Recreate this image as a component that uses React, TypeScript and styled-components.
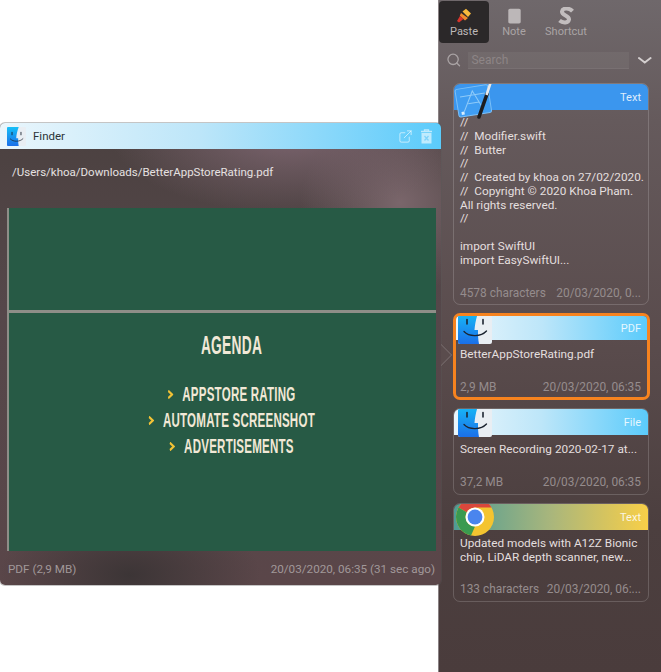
import React from 'react';
import styled, { createGlobalStyle } from 'styled-components';
import { ExternalLink, Search } from 'lucide-react';

const GlobalStyle = createGlobalStyle`
  html, body {
    margin: 0;
    padding: 0;
    background: #fff;
    font-family: "Roboto", "Noto Sans", sans-serif;
  }
`;

const Desktop = styled.div`
  position: relative;
  width: 661px;
  height: 672px;
  overflow: hidden;
  background: #fff;
`;

const Sidebar = styled.aside`
  position: absolute;
  left: 438px;
  top: 0;
  width: 223px;
  height: 672px;
  box-sizing: border-box;
  display: flex;
  flex-direction: column;
  border-left: 1px solid #8a8284;
  background: linear-gradient(180deg, #6f686b 0%, #655a5c 18%, #5a4c4d 50%, #4c3f3f 78%, #4a3c3c 100%);
`;

const Tabs = styled.div`
  display: flex;
  height: 44px;
  padding-top: 1px;
  box-sizing: border-box;
`;

const Tab = styled.div<{ $active?: boolean; $width: number }>`
  width: ${({ $width }) => $width}px;
  height: 42px;
  box-sizing: border-box;
  padding-top: 6px;
  display: flex;
  flex-direction: column;
  align-items: center;
  gap: 1px;
  border-radius: 4px;
  background: ${({ $active }) => ($active ? '#2b2829' : 'transparent')};
  color: ${({ $active }) => ($active ? '#bdb9b9' : '#aaa4a5')};
  font-size: 11px;
  line-height: 14px;
`;

const TabIcon = styled.div`
  height: 17px;
  display: flex;
  align-items: center;
  justify-content: center;
`;

const SearchRow = styled.div`
  display: flex;
  align-items: center;
  height: 32px;
  padding: 0 9px 0 7px;
  color: #a9a3a4;
`;

const SearchInput = styled.input`
  width: 161px;
  height: 17px;
  margin-left: 7px;
  margin-right: 9px;
  padding: 0 3px;
  box-sizing: border-box;
  border: 0;
  border-bottom: 1px solid rgba(255, 255, 255, 0.06);
  outline: none;
  background: rgba(255, 255, 255, 0.05);
  font-family: inherit;
  font-size: 12px;
  color: #8f8788;

  &::placeholder {
    color: #8d8586;
    opacity: 1;
  }
`;

const CardList = styled.div`
  display: flex;
  flex-direction: column;
  gap: 8px;
  padding: 7px 12px 0 14px;
`;

const Card = styled.section<{ $height: number; $selected?: boolean }>`
  position: relative;
  height: ${({ $height }) => $height}px;
  width: ${({ $selected }) => ($selected ? 197 : 196)}px;
  box-sizing: border-box;
  display: flex;
  flex-direction: column;
  overflow: hidden;
  border-radius: 7px;
  border: ${({ $selected }) => ($selected ? '3px solid #f6831f' : '1px solid rgba(255, 255, 255, 0.17)')};
`;

const CardHeader = styled.header<{ $background: string; $selected?: boolean }>`
  height: ${({ $selected }) => ($selected ? 24 : 26)}px;
  flex-shrink: 0;
  display: flex;
  align-items: center;
  justify-content: flex-end;
  padding-right: ${({ $selected }) => ($selected ? 6 : 7)}px;
  background: ${({ $background }) => $background};
  color: rgba(255, 255, 255, 0.85);
  font-size: 11px;
`;

const IconSlot = styled.div<{ $left: number; $top: number }>`
  position: absolute;
  left: ${({ $left }) => $left}px;
  top: ${({ $top }) => $top}px;
  display: flex;
`;

const CardText = styled.div<{ $selected?: boolean; $top?: number }>`
  flex: 1;
  padding: ${({ $top }) => $top ?? 6}px 4px 0 ${({ $selected }) => ($selected ? 4 : 6)}px;
  color: #e4dfdf;
  font-size: 11.8px;
  line-height: 13.75px;
  white-space: pre;
`;

const CardFooter = styled.footer<{ $selected?: boolean; $bottom?: number }>`
  display: flex;
  justify-content: space-between;
  white-space: nowrap;
  padding: 0 ${({ $selected }) => ($selected ? '6px' : '7px')} ${({ $bottom }) => $bottom ?? 5}px ${({ $selected }) => ($selected ? '4px' : '6px')};
  color: #958c8d;
  font-size: 11.9px;
  line-height: 14px;
`;

const FinderWindow = styled.div`
  position: absolute;
  left: 0;
  top: 123px;
  width: 441px;
  height: 462px;
  display: flex;
  flex-direction: column;
  border-radius: 5px;
  box-shadow: 0 0 0 1px rgba(90, 90, 90, 0.35);
  background:
    radial-gradient(130px 70px at 130px 452px, #3c3536 0%, rgba(60, 53, 54, 0) 100%),
    radial-gradient(180px 80px at 290px 10px, #7c656f 0%, rgba(124, 101, 111, 0) 100%),
    radial-gradient(100px 90px at 400px 80px, #7a666b 0%, rgba(122, 102, 107, 0) 100%),
    linear-gradient(180deg, #4b4140 0%, #55474a 40%, #5a4649 100%);
`;

const PopoverArrow = styled.div`
  position: absolute;
  left: 441px;
  top: 218px;
  width: 12px;
  height: 28px;
  overflow: hidden;

  &::before {
    content: '';
    position: absolute;
    left: -8px;
    top: 6px;
    width: 15px;
    height: 15px;
    transform: rotate(45deg);
    background: #5a4c4d;
    border-top: 1px solid rgba(255, 255, 255, 0.16);
    border-right: 1px solid rgba(255, 255, 255, 0.16);
  }
`;

const TitleBar = styled.header`
  height: 26px;
  flex-shrink: 0;
  display: flex;
  align-items: center;
  padding: 0 8px 0 7px;
  border-radius: 5px 5px 0 0;
  background: linear-gradient(90deg, #eaf6fc 0%, #bde6f9 45%, #5bcbfb 100%);
  color: #2c3438;
  font-size: 11.5px;
`;

const TitleText = styled.span`
  flex: 1;
  margin-left: 7px;
`;

const TitleActions = styled.div`
  display: flex;
  align-items: center;
  gap: 7px;
  color: rgba(255, 255, 255, 0.6);
`;

const PathRow = styled.div`
  height: 59px;
  box-sizing: border-box;
  padding: 15px 0 0 12px;
  color: #e6e1e1;
  font-size: 11.5px;
  line-height: 16px;
`;

const Slide = styled.div`
  height: 343px;
  margin: 0 5px 0 7px;
  box-sizing: border-box;
  display: flex;
  flex-direction: column;
  border-left: 2px solid #8e8e88;
  background: #275a45;
`;

const SlideRule = styled.div`
  height: 3px;
  margin-top: 102px;
  background: #8e8e88;
`;

const SlideBody = styled.div`
  flex: 1;
  display: flex;
  flex-direction: column;
  align-items: center;
  padding: 18px 0 0 18px;
  color: #f1e8d6;
  font-family: "Liberation Sans", sans-serif;
  font-weight: 700;
  transform: scaleX(0.55);
  transform-origin: calc(50% + 9px) 0;
`;

const SlideTitle = styled.div`
  font-size: 25px;
  line-height: 28px;
  letter-spacing: 0.5px;
  margin-bottom: 22px;
`;

const SlideItem = styled.div`
  height: 26px;
  display: flex;
  align-items: center;
  gap: 16px;
  font-size: 21px;
  letter-spacing: 0.4px;
  white-space: nowrap;
`;

const Chevron = styled.svg`
  width: 11px;
  height: 9px;
`;

const WindowFooter = styled.footer`
  flex: 1;
  display: flex;
  align-items: center;
  justify-content: space-between;
  padding: 2px 6px 0 8px;
  color: #a19899;
  font-size: 11.7px;
`;

const FinderIcon = ({ size, cropped }: { size: number; cropped?: boolean }) => (
  <svg width={size} height={cropped ? (size * 28) / 34 : size} viewBox={cropped ? '0 6 34 28' : '0 0 34 34'}>
    <defs>
      <linearGradient id="finderBlue" x1="0" y1="0" x2="0" y2="1">
        <stop offset="0" stopColor="#17c0f8" />
        <stop offset="1" stopColor="#1b6fe8" />
      </linearGradient>
    </defs>
    <rect x="0" y="0" width="34" height="34" rx="2" fill="#e9eef3" />
    <path d="M2 0H21C18.5 7 17 13 16.5 20H20C20 25 20 29 21 34H2C1 34 0 33 0 32V2C0 1 1 0 2 0Z" fill="url(#finderBlue)" />
    <path d="M9 9.5V14M25 9.5V14" stroke="#1c2430" strokeWidth="1.6" strokeLinecap="round" />
    <path d="M6 21.5C11 27 23 27 28.5 21" stroke="#1c2430" strokeWidth="1.3" fill="none" strokeLinecap="round" />
  </svg>
);

const XcodeIcon = () => (
  <svg width="40" height="36" viewBox="0 0 40 36">
    <g transform="rotate(-9 19 19)">
      <rect x="3" y="4" width="33" height="28" rx="2" fill="#3f9df2" stroke="#7cc0f7" strokeWidth="1" />
      <path d="M9 27L20 8L28 27M14 20H25M7 12H32" stroke="#a9d9fb" strokeWidth="1" fill="none" opacity="0.75" />
      <rect x="6" y="27" width="3" height="3" fill="#d8eefd" />
    </g>
    <path d="M25 34L33 11" stroke="#1d1d1f" strokeWidth="3.6" strokeLinecap="round" />
    <path d="M32.5 12L36.5 0" stroke="#e8e8e8" strokeWidth="2.6" />
  </svg>
);

const ChromeIcon = () => (
  <svg width="40" height="32" viewBox="0 6 40 32">
    <circle cx="19" cy="19" r="19" fill="#f4c430" />
    <path d="M19 0A19 19 0 0 1 35.5 9.5L19 9.5A9.5 9.5 0 0 0 10.8 14.3L2.6 9.5A19 19 0 0 1 19 0Z" fill="#d9473c" />
    <path d="M2.6 9.5L10.8 14.3A9.5 9.5 0 0 0 19 28.5L15 37.6A19 19 0 0 1 2.6 9.5Z" fill="#3a9a50" />
    <circle cx="19" cy="19" r="9.5" fill="#fff" />
    <circle cx="19" cy="19" r="7.4" fill="#4a85ee" />
  </svg>
);

const MarkerIcon = () => (
  <svg width="16" height="16" viewBox="0 0 16 16">
    <path d="M6.5 3.5L10 0.8L15 5.5L12 9Z" fill="#f7b93c" />
    <path d="M5 5L12 10L9 12.5L3.8 7.8Z" fill="#f08a2c" />
    <path d="M4 8L7.5 11L3 14.5L1 13Z" fill="#d8352c" />
  </svg>
);

const NoteIcon = () => (
  <svg width="13" height="16" viewBox="0 0 13 16">
    <path d="M2 0.8H11C12 0.8 12.7 1.5 12.7 2.5V13.8C12.7 14.8 12 15.5 11 15.5H2C1 15.5 0.3 14.8 0.3 13.8V2.5C0.3 1.5 1 0.8 2 0.8Z" fill="#bcb7b8" />
  </svg>
);

const ShortcutIcon = () => (
  <svg width="18" height="18" viewBox="0 0 18 18">
    <path d="M15.5 4.2C12 0.5 5.5 0.8 5 4.5C4.5 8.5 12.5 8.5 12 12.5C11.5 16 6 16.5 2.5 13.5" stroke="#c2bdbe" strokeWidth="4" fill="none" />
  </svg>
);

const TrashIcon = () => (
  <svg width="13" height="15" viewBox="0 0 13 15">
    <path d="M1 2.5H12M4.5 2V0.8H8.5V2" stroke="currentColor" strokeWidth="1.3" fill="none" />
    <path d="M1.5 4H11.5V14.5H1.5Z" fill="currentColor" />
    <path d="M4.5 7L8.5 11.5M8.5 7L4.5 11.5" stroke="#7fd3fa" strokeWidth="1.3" />
  </svg>
);

const SlideChevron = () => (
  <Chevron viewBox="0 0 11 9" preserveAspectRatio="none">
    <path d="M1.5 0.8L8.5 4.5L1.5 8.2" stroke="#f2c235" strokeWidth="2.6" fill="none" />
  </Chevron>
);

const finderGradient = 'linear-gradient(90deg, #eaf6fc 0%, #bde6f9 45%, #5bcbfb 100%)';

const App = () => (
  <Desktop>
    <GlobalStyle />
    <Sidebar>
      <Tabs>
        <Tab $active $width={50}>
          <TabIcon><MarkerIcon /></TabIcon>
          Paste
        </Tab>
        <Tab $width={50}>
          <TabIcon><NoteIcon /></TabIcon>
          Note
        </Tab>
        <Tab $width={54}>
          <TabIcon><ShortcutIcon /></TabIcon>
          Shortcut
        </Tab>
      </Tabs>
      <SearchRow>
        <Search size={16} strokeWidth={2} />
        <SearchInput placeholder="Search" readOnly />
        <svg width="14" height="7" viewBox="0 0 14 7">
          <path d="M1 1L7 5.5L13 1" stroke="#d4cfcf" strokeWidth="2" fill="none" strokeLinecap="round" />
        </svg>
      </SearchRow>
      <CardList>
        <Card $height={222}>
          <CardHeader $background="#3b96ee">Text</CardHeader>
          <IconSlot $left={0} $top={-1}><XcodeIcon /></IconSlot>
          <CardText>{`//
//  Modifier.swift
//  Butter
//
//  Created by khoa on 27/02/2020.
//  Copyright © 2020 Khoa Pham.
All rights reserved.
//

import SwiftUI
import EasySwiftUI...`}</CardText>
          <CardFooter $bottom={4}>
            <span>4578 characters</span>
            <span>20/03/2020, 0...</span>
          </CardFooter>
        </Card>
        <Card $height={87} $selected>
          <CardHeader $background={finderGradient} $selected>PDF</CardHeader>
          <IconSlot $left={2} $top={0}><FinderIcon size={34} cropped /></IconSlot>
          <CardText $selected $top={8}>BetterAppStoreRating.pdf</CardText>
          <CardFooter $selected $bottom={3}>
            <span>2,9 MB</span>
            <span>20/03/2020, 06:35</span>
          </CardFooter>
        </Card>
        <Card $height={87}>
          <CardHeader $background={finderGradient}>File</CardHeader>
          <IconSlot $left={4} $top={0}><FinderIcon size={34} cropped /></IconSlot>
          <CardText $top={8}>Screen Recording 2020-02-17 at...</CardText>
          <CardFooter>
            <span>37,2 MB</span>
            <span>20/03/2020, 06:35</span>
          </CardFooter>
        </Card>
        <Card $height={99}>
          <CardHeader $background="linear-gradient(90deg, #4f9c94 0%, #a9b67c 50%, #f8cf48 100%)">Text</CardHeader>
          <IconSlot $left={2} $top={0}><ChromeIcon /></IconSlot>
          <CardText $top={7}>{`Updated models with A12Z Bionic
chip, LiDAR depth scanner, new...`}</CardText>
          <CardFooter>
            <span>133 characters</span>
            <span>20/03/2020, 06:...</span>
          </CardFooter>
        </Card>
      </CardList>
    </Sidebar>

    <FinderWindow>
      <TitleBar>
        <FinderIcon size={19} />
        <TitleText>Finder</TitleText>
        <TitleActions>
          <ExternalLink size={15} strokeWidth={1.6} />
          <TrashIcon />
        </TitleActions>
      </TitleBar>
      <PathRow>/Users/khoa/Downloads/BetterAppStoreRating.pdf</PathRow>
      <Slide>
        <SlideRule />
        <SlideBody>
          <SlideTitle>AGENDA</SlideTitle>
          <SlideItem>
            <SlideChevron />
            APPSTORE RATING
          </SlideItem>
          <SlideItem>
            <SlideChevron />
            AUTOMATE SCREENSHOT
          </SlideItem>
          <SlideItem>
            <SlideChevron />
            ADVERTISEMENTS
          </SlideItem>
        </SlideBody>
      </Slide>
      <WindowFooter>
        <span>PDF (2,9 MB)</span>
        <span>20/03/2020, 06:35 (31 sec ago)</span>
      </WindowFooter>
      <PopoverArrow />
    </FinderWindow>
  </Desktop>
);

export default App;
